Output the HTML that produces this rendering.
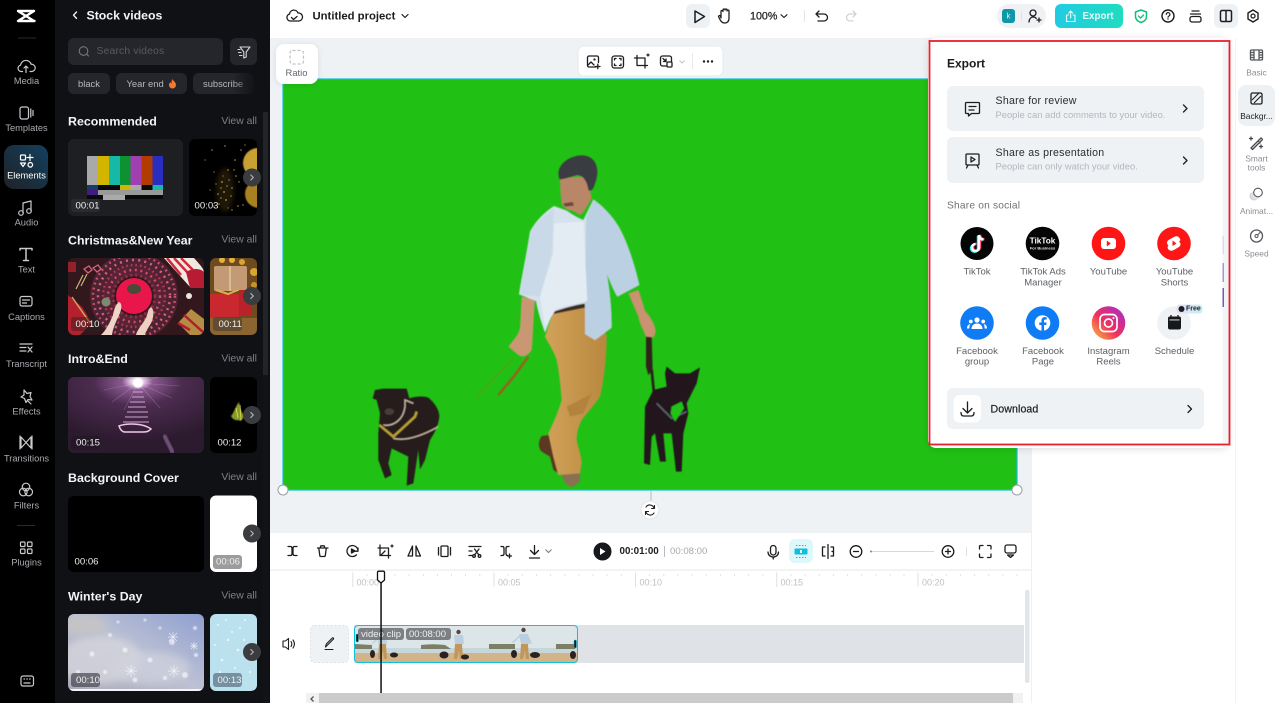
<!DOCTYPE html>
<html><head><meta charset="utf-8"><title>Editor</title>
<style>
html,body{margin:0;padding:0;background:#fff;width:1276px;height:703px;overflow:hidden}
svg{display:block;font-family:"Liberation Sans",sans-serif}
text{dominant-baseline:central}
.rl{font-size:9.3px;fill:#a9abb0;text-anchor:middle}
.rw{fill:none;stroke:#c9cacd;stroke-width:1.2;stroke-linecap:round;stroke-linejoin:round}
.h{font-size:12.4px;font-weight:bold;fill:#f4f4f5}
.va{font-size:10.4px;fill:#7d8086;text-anchor:end}
.d{font-size:9.6px;fill:#f0f0f0}
.ic{fill:none;stroke:#1c1d20;stroke-width:1.3;stroke-linecap:round;stroke-linejoin:round}
.sl{font-size:9.5px;fill:#5c5f64;text-anchor:middle}
.pl{font-size:8.4px;fill:#8a8d92;text-anchor:middle}
.rt{font-size:9px;fill:#bcc0c5}
.tt{font-size:10.6px;fill:#2a2c30;letter-spacing:.25px}
.ts{font-size:9.4px;fill:#b3b6bb}
</style></head><body>
<svg width="1276" height="703" viewBox="0 0 1276 703" xmlns="http://www.w3.org/2000/svg">
<defs>
<clipPath id="c1"><rect x="68" y="258" width="136" height="77" rx="6"/></clipPath>
<clipPath id="c2"><rect x="210" y="258" width="47" height="77" rx="6"/></clipPath>
<clipPath id="c3"><rect x="68" y="377" width="136" height="76" rx="6"/></clipPath>
<clipPath id="c4"><rect x="68" y="614" width="136" height="77" rx="6"/></clipPath>
<clipPath id="c5"><rect x="210" y="614" width="47" height="77" rx="6"/></clipPath>
<clipPath id="c6"><rect x="189" y="139" width="68" height="77" rx="6"/></clipPath>
<clipPath id="clip"><rect x="355" y="626" width="222" height="36" rx="3"/></clipPath>
<radialGradient id="pu" cx="51%" cy="6%" r="80%"><stop offset="0" stop-color="#fff"/><stop offset=".05" stop-color="#f0d8f0"/><stop offset=".14" stop-color="#8a5a90"/><stop offset=".4" stop-color="#4c2c50"/><stop offset="1" stop-color="#2c1a2e"/></radialGradient>
<linearGradient id="ex" x1="0" x2="1"><stop offset="0" stop-color="#22cbe2"/><stop offset="1" stop-color="#1fdcc0"/></linearGradient>
<linearGradient id="el" x1="1" y1="0" x2="0" y2="1"><stop offset="0" stop-color="#13405e"/><stop offset="1" stop-color="#1f2226"/></linearGradient>
<linearGradient id="wi" x1="1" y1="0" x2="0" y2="1"><stop offset="0" stop-color="#8f9fd0"/><stop offset=".5" stop-color="#bcc1d4"/><stop offset="1" stop-color="#a9a9b8"/></linearGradient>
<linearGradient id="ig" x1="0" y1="1" x2="1" y2="0"><stop offset="0" stop-color="#fdc33a"/><stop offset=".45" stop-color="#f0305c"/><stop offset="1" stop-color="#a22bd8"/></linearGradient>
<linearGradient id="fd" x1="0" x2="1"><stop offset="0" stop-color="#101115" stop-opacity="0"/><stop offset="1" stop-color="#101115"/></linearGradient>
<linearGradient id="fr" x1="0" x2="1"><stop offset="0" stop-color="#e8dcf8"/><stop offset="1" stop-color="#c8f0f4"/></linearGradient>
<linearGradient id="pan" x1="0" x2="1"><stop offset="0" stop-color="#d2a25a"/><stop offset="1" stop-color="#b8883f"/></linearGradient>
<filter id="sh" x="-10%" y="-10%" width="120%" height="120%"><feDropShadow dx="0" dy="1" stdDeviation="4" flood-color="#000" flood-opacity=".13"/></filter>
<filter id="sb" x="-30%" y="-30%" width="160%" height="160%"><feDropShadow dx="0" dy="1" stdDeviation="3" flood-color="#000" flood-opacity=".1"/></filter>
<filter id="b0"><feGaussianBlur stdDeviation=".35"/></filter>
<filter id="b1"><feGaussianBlur stdDeviation=".6"/></filter>
<filter id="b2" x="-50%" y="-50%" width="200%" height="200%"><feGaussianBlur stdDeviation="2.500"/></filter>
<filter id="bm"><feGaussianBlur stdDeviation="1.400"/></filter>
<filter id="bf"><feGaussianBlur stdDeviation="4"/></filter>
</defs>

<!-- base surfaces -->
<rect width="1276" height="703" fill="#fff"/>
<rect x="270" y="38" width="762" height="495" fill="#eff2f5"/>
<rect x="1031" y="533" width="1" height="170" fill="#eef0f2"/>
<rect x="1235" y="38" width="1" height="665" fill="#f1f2f4"/>
<rect x="270" y="569" width="761" height="2" fill="#f2f3f5"/>

<!-- left rail -->
<rect width="55" height="703" fill="#000"/>
<path d="M18 11H34L18 21H34.5M18 11L34 21" fill="none" stroke="#fff" stroke-width="2.400" stroke-linejoin="round" stroke-linecap="round"/>
<rect x="18" y="37.500" width="18" height="1" fill="#26272a"/>
<rect x="4" y="145" width="44" height="44" rx="10" fill="url(#el)"/>
<g class="rw">
<path d="M22.500 71.500h-1.500a3.200 3.200 0 0 1-.5-6.300 5.500 5.500 0 0 1 10.700-.9 3.600 3.600 0 0 1 .8 7.200h-2M26 72.500v-6M24 68l2-2 2 2"/>
<rect x="20" y="107" width="8.500" height="12" rx="2"/><path d="M30.800 109v8M33 110.500v5"/>
<g stroke="#fff"><rect x="20.500" y="155" width="5" height="5" rx="1"/><path d="M30 154.500v6M27 157.500h6M20.500 163h5l-2.500 3.500zM30.300 162.500a2.300 2.300 0 1 0 .01 0z"/></g>
<path d="M23 213v-10l8-2v10"/><circle cx="21" cy="213" r="2.300"/><circle cx="29" cy="211" r="2.300"/>
<path d="M20 250v-1.500h12v1.500M26 248.500v12M23.500 260.500h5" stroke-width="1.500"/>
<rect x="20" y="296.500" width="12" height="9.500" rx="2"/><path d="M22.500 300h7M22.500 303h4"/>
<path d="M20 344h12M20 347.500h6M20 351h6M28 347l4 5M32 347l-4 5"/>
<path d="M24 390l3 3.500 4-1-1 4 2 3.500-4-.5-2 3-1.500-4-3.500-1.500 3-2z"/><path d="M28 401l3 3"/>
<path d="M21 437v11l5-5.500zM31 437v11l-5-5.500z"/><path d="M20 436v13M32 436v13"/>
<circle cx="26" cy="487" r="3.800"/><circle cx="23.300" cy="492" r="3.800"/><circle cx="28.700" cy="492" r="3.800"/>
<rect x="20.500" y="542" width="4.500" height="4.500" rx="1"/><rect x="27.500" y="542" width="4.500" height="4.500" rx="1"/><rect x="20.500" y="549" width="4.500" height="4.500" rx="1"/><rect x="27.500" y="549" width="4.500" height="4.500" rx="1"/>
<rect x="21" y="676" width="12.500" height="10" rx="2"/><path d="M24 679h.5M26.800 679h.5M29.600 679h.5M24 683h6"/>
</g>
<text class="rl" x="26.500" y="81">Media</text>
<text class="rl" x="26.500" y="128">Templates</text>
<text class="rl" x="26.500" y="175.500" style="fill:#fff">Elements</text>
<text class="rl" x="26.500" y="222.500">Audio</text>
<text class="rl" x="26.500" y="269.500">Text</text>
<text class="rl" x="26.500" y="317">Captions</text>
<text class="rl" x="26.500" y="364">Transcript</text>
<text class="rl" x="26.500" y="411.500">Effects</text>
<text class="rl" x="26.500" y="458.500">Transitions</text>
<text class="rl" x="26.500" y="505.500">Filters</text>
<text class="rl" x="26.500" y="562.500">Plugins</text>
<rect x="17" y="525" width="18" height="1" fill="#2a2b2e"/>

<!-- stock panel -->
<rect x="55" y="0" width="215" height="703" fill="#101115"/>
<rect x="263" y="112" width="5" height="263" fill="#232428"/>
<rect x="263" y="375" width="5" height="328" fill="#121317"/>
<path d="M76.500 12l-3 3.200 3 3.200" fill="none" stroke="#f2f2f2" stroke-width="1.400" stroke-linecap="round" stroke-linejoin="round"/>
<text x="86.500" y="15.500" style="font-size:12.300px;font-weight:bold;fill:#f4f4f5">Stock videos</text>
<rect x="68" y="38" width="155" height="27" rx="6" fill="#25262b"/>
<circle cx="83.500" cy="51" r="4.300" fill="none" stroke="#73767c" stroke-width="1.100"/><path d="M86.800 54.300l2 2" stroke="#73767c" stroke-width="1.100"/>
<text x="96.500" y="51.500" style="font-size:10.400px;fill:#585a60;letter-spacing:.15px">Search videos</text>
<rect x="230" y="38" width="27" height="27" rx="6" fill="#25262b"/>
<path d="M240 47h10l-3.800 5v5l-2.400 1v-6zM238 49.500h2M238.500 52.500h2.500M239.500 55.500h2.500" fill="none" stroke="#d5d6d8" stroke-width="1.100" stroke-linejoin="round" stroke-linecap="round"/>
<rect x="68" y="73" width="42" height="21" rx="6" fill="#25262b"/>
<text x="89" y="83.500" style="font-size:9.400px;fill:#b7b8bc;text-anchor:middle">black</text>
<rect x="116" y="73" width="71" height="21" rx="6" fill="#25262b"/>
<text x="126.500" y="83.500" style="font-size:9.400px;fill:#b7b8bc">Year end</text>
<path d="M172.500 79c.5 2 3.500 3 3.500 6a3.500 3.500 0 0 1-7 0c0-1.500.8-2.300 1.500-3 .2 1 .5 1.300 1 1.500 0-1.500 0-3 1-4.500z" fill="#ef7a32"/>
<rect x="193" y="73" width="61" height="21" rx="6" fill="#25262b"/>
<text x="203" y="83.500" style="font-size:9.400px;fill:#b7b8bc">subscribe</text>
<rect x="232" y="73" width="25" height="21" fill="url(#fd)"/>

<text class="h" x="68" y="121.500">Recommended</text><text class="va" x="257" y="121.500">View all</text>
<text class="h" x="68" y="240.500">Christmas&amp;New Year</text><text class="va" x="257" y="240">View all</text>
<text class="h" x="68" y="359">Intro&amp;End</text><text class="va" x="257" y="359">View all</text>
<text class="h" x="68" y="478">Background Cover</text><text class="va" x="257" y="477.500">View all</text>
<text class="h" x="68" y="596.500">Winter's Day</text><text class="va" x="257" y="596">View all</text>

<!-- recommended -->
<rect x="68" y="139" width="115" height="77" rx="6" fill="#1e1f23"/>
<rect x="87" y="156" width="76" height="43" fill="#0a0a0a"/>
<g filter="url(#b0)">
<rect x="87" y="156" width="11" height="29" fill="#a9a9a9"/><rect x="98" y="156" width="11" height="29" fill="#d3b500"/><rect x="109" y="156" width="11" height="29" fill="#14b8a8"/><rect x="120" y="156" width="10.500" height="29" fill="#0d9230"/><rect x="130.500" y="156" width="11" height="29" fill="#a040b0"/><rect x="141.500" y="156" width="11" height="29" fill="#b23a06"/><rect x="152.500" y="156" width="10.500" height="29" fill="#2a2fc0"/>
<rect x="87" y="185" width="11" height="5" fill="#123a66"/><rect x="120" y="185" width="10.500" height="5" fill="#d3b500"/><rect x="130.500" y="185" width="11" height="5" fill="#a9a9a9"/><rect x="152.500" y="185" width="10.500" height="5" fill="#14b8a8"/>
<rect x="87" y="190" width="11" height="5" fill="#3f1a80"/><rect x="98" y="190" width="65" height="5" fill="#999"/>
<rect x="103" y="195" width="22" height="5" fill="#aaa"/>
</g>
<rect x="71" y="199" width="29" height="13" rx="3" fill="#2a2b2f"/>
<text class="d" x="75.500" y="206">00:01</text>
<rect x="189" y="139" width="68" height="77" rx="6" fill="#000"/>
<g clip-path="url(#c6)">
<circle cx="258" cy="163" r="15" fill="#c9a030" filter="url(#b1)"/><circle cx="259" cy="194" r="14" fill="#a88224" filter="url(#b1)"/>
<ellipse cx="225" cy="190" rx="9" ry="22" fill="#5a4418" opacity=".35" filter="url(#b2)"/>
<g fill="#c09a44">
<circle cx="212" cy="150" r=".7"/><circle cx="225" cy="146" r=".7"/><circle cx="235" cy="160" r=".8"/><circle cx="228" cy="170" r=".8"/><circle cx="222" cy="182" r=".9"/><circle cx="218" cy="194" r=".8"/><circle cx="226" cy="200" r=".9"/><circle cx="232" cy="188" r=".8"/><circle cx="238" cy="206" r=".8"/><circle cx="214" cy="172" r=".6"/><circle cx="205" cy="160" r=".6"/><circle cx="241" cy="150" r=".7"/><circle cx="236" cy="176" r=".8"/><circle cx="224" cy="192" r=".9"/><circle cx="229" cy="180" r=".7"/><circle cx="219" cy="204" r=".8"/><circle cx="245" cy="145" r=".6"/><circle cx="243" cy="205" r=".7"/><circle cx="232" cy="210" r=".7"/><circle cx="210" cy="190" r=".6"/><circle cx="221" cy="188" r=".7"/><circle cx="227" cy="186" r=".7"/><circle cx="223" cy="176" r=".6"/><circle cx="231" cy="196" r=".7"/><circle cx="221" cy="198" r=".7"/><circle cx="216" cy="184" r=".6"/><circle cx="234" cy="170" r=".7"/><circle cx="239" cy="182" r=".7"/><circle cx="228" cy="208" r=".6"/><circle cx="214" cy="206" r=".6"/>
</g></g>
<text class="d" x="194.500" y="206">00:03</text>

<!-- christmas -->
<g clip-path="url(#c1)">
<rect x="68" y="258" width="136" height="77" fill="#32181c"/>
<g filter="url(#b0)" fill="none">
<circle cx="134" cy="296" r="38" stroke="#4e2430" stroke-width="12"/>
<circle cx="134" cy="296" r="26" stroke="#5a2434" stroke-width="12"/>
<circle cx="134" cy="296" r="41" stroke="#c9526e" stroke-width="2.500" stroke-dasharray="1.800 3.400"/>
<circle cx="134" cy="296" r="36" stroke="#d8607e" stroke-width="2.500" stroke-dasharray="2 4.200"/>
<circle cx="134" cy="296" r="31" stroke="#a83c58" stroke-width="2.500" stroke-dasharray="1.600 3"/>
<circle cx="134" cy="296" r="26" stroke="#c9506c" stroke-width="2.500" stroke-dasharray="2 3.600"/>
<circle cx="134" cy="296" r="21" stroke="#8a3048" stroke-width="3" stroke-dasharray="2 3"/>
</g>
<path d="M164 258h30c5 6 10 10 10 15v12l-8-4-6 6z" fill="#efe9e2"/>
<path d="M167 258l14 17M174 258l14 15M181 258l12 12" stroke="#cf2a3c" stroke-width="2.500"/>
<path d="M186 272c6-4 14-4 18 0v16h-14z" fill="#b81c30" filter="url(#b0)"/>
<circle cx="189" cy="296" r="3" fill="#ece6de"/>
<path d="M178 323l13-14 13 10v16h-14z" fill="#b58c44"/><path d="M184 315l20 18M178 323l12 7" stroke="#b01e30" stroke-width="2.500" fill="none"/>
<path d="M68 295l14 12 10 16-12 12H68z" fill="#b5202e"/><path d="M72 297l18 26" stroke="#c8a860" stroke-width="1.500"/>
<path d="M68 262h8v10h-8z" fill="#96202a"/>
<circle cx="134" cy="296" r="18" fill="#e8174c" filter="url(#b0)"/>
<ellipse cx="134" cy="289" rx="7" ry="5" fill="#4c4a38" filter="url(#b0)"/>
<path d="M101 335c6-6 9-13 12-20 1-6 3-11 6-13 3 1 3 6 1 11-3 7-7 14-8 22z" fill="#f0d4c6"/>
<path d="M136 335c1-5 6-10 10-17 2-5 2-9 5-11 3 2 3 8 1 14-2 5-6 9-7 14z" fill="#ecd0c2"/>
<circle cx="106" cy="302" r="4.500" fill="#7c8a70" filter="url(#b0)"/>
<path d="M76 289l7-14M81 286l6-12" stroke="#c9b27a" stroke-width="1.200"/>
<path d="M84 269l5-3 3 4-4 3zM93 268l5-3 3 4-4 3z" fill="none" stroke="#d2647e" stroke-width="1.300"/>
</g>
<rect x="71" y="317" width="29" height="14" rx="3" fill="rgba(40,30,30,.45)"/>
<text class="d" x="75.500" y="324.500">00:10</text>
<g clip-path="url(#c2)">
<rect x="210" y="258" width="47" height="77" fill="#6d4b1e"/>
<circle cx="222" cy="260" r="3" fill="#e2b23c"/><circle cx="232" cy="260" r="3" fill="#e2b23c"/><circle cx="242" cy="262" r="3" fill="#d6a532"/><circle cx="254" cy="272" r="4" fill="#d6a532"/><circle cx="254" cy="285" r="3" fill="#c4942a"/>
<rect x="214" y="266" width="33" height="25" rx="2" fill="#c49a74"/><path d="M230 266v25" stroke="#d8bc96" stroke-width="2"/>
<rect x="210" y="294" width="29" height="24" fill="#c8282e"/><rect x="239" y="290" width="12" height="25" fill="#b82228"/>
<path d="M216 290l12 4 10-4" stroke="#d8b24a" stroke-width="2" fill="none"/>
<rect x="210" y="318" width="47" height="17" fill="#8a6530"/>
</g>
<rect x="213" y="317" width="29" height="14" rx="3" fill="rgba(70,60,50,.6)"/>
<text class="d" x="218.500" y="324.500">00:11</text>

<!-- intro -->
<rect x="68" y="377" width="136" height="76" rx="6" fill="url(#pu)"/>
<g clip-path="url(#c3)">
<g stroke="#f3d9f0" stroke-width=".6" opacity=".28" filter="url(#b0)"><path d="M138 383L112 402M138 383L124 410M138 383L160 408M138 383L172 398M138 383L104 390M138 383L180 386M138 383L118 377M138 383L158 377"/></g>
<circle cx="138" cy="383" r="5" fill="#fff" filter="url(#b1)"/>
<g fill="none" stroke="#d2a4d0" stroke-width="1" filter="url(#b0)"><path d="M133 392h10M132 397h12M130 402h15M128 407h18M127 412h21M125 417h23M123 422h26"/></g>
<path d="M119 426c8-3 24-3 32 3-3 3-5 3-8 3h-18c-3 0-5-3-6-6z" fill="none" stroke="#f0c8ea" stroke-width="1.500" filter="url(#b0)"/>
<path d="M164 435l9 18" stroke="#6f5078" stroke-width="4" filter="url(#b1)"/>
</g>
<rect x="71" y="436" width="29" height="14" rx="3" fill="rgba(30,20,30,.5)"/>
<text class="d" x="76" y="443">00:15</text>
<rect x="210" y="377" width="47" height="76" rx="6" fill="#000"/>
<path d="M231 416c3-3 4-9 8-14 1 5 2 11 6 14-3 3-4 7-6 4-2 1-6 0-8-4z" fill="#8a9a2a" filter="url(#b1)"/>
<path d="M236 408l2 10M240 405l1 15" stroke="#dde050" stroke-width=".8"/>
<text class="d" x="217.500" y="443">00:12</text>

<!-- background -->
<rect x="68" y="496" width="136" height="76" rx="6" fill="#000"/>
<text class="d" x="74.500" y="562">00:06</text>
<rect x="210" y="495.500" width="47" height="76.500" rx="6" fill="#fff"/>
<rect x="213" y="555" width="29" height="14" rx="3" fill="#9c9c9c"/>
<text class="d" x="216" y="562">00:06</text>

<!-- winter -->
<g clip-path="url(#c4)">
<rect x="68" y="614" width="136" height="77" fill="url(#wi)"/>
<ellipse cx="100" cy="660" rx="42" ry="24" fill="#d5d5dc" opacity=".8" filter="url(#bf)"/>
<ellipse cx="150" cy="668" rx="40" ry="16" fill="#d0d2de" opacity=".7" filter="url(#bf)"/>
<ellipse cx="85" cy="625" rx="22" ry="10" fill="#c4c4c6" filter="url(#bf)"/>
<g fill="#fff" opacity=".6" filter="url(#b1)">
<circle cx="92" cy="654" r="2.500"/><circle cx="110" cy="635" r="2"/><circle cx="125" cy="650" r="2.500"/><circle cx="150" cy="660" r="2.500"/><circle cx="172" cy="642" r="3"/><circle cx="185" cy="675" r="3"/><circle cx="195" cy="628" r="2"/><circle cx="135" cy="680" r="2.500"/><circle cx="78" cy="672" r="2"/><circle cx="105" cy="672" r="2"/><circle cx="160" cy="628" r="1.500"/><circle cx="145" cy="620" r="1.500"/><circle cx="118" cy="622" r="1.500"/><circle cx="196" cy="655" r="2"/><circle cx="165" cy="678" r="2"/>
</g>
<g stroke="#fff" stroke-width=".7" opacity=".75"><path d="M198 646h-8M194 642v8M191 643l6 6M197 643l-6 6M137 671h-12M131 665v12M127 667l8 8M135 667l-8 8M180 671h-12M174 665v12M170 667l8 8M178 667l-8 8M178 637h-10M173 632v10M169 633l8 8M177 633l-8 8"/></g>
<rect x="68" y="689" width="136" height="2" fill="#f4f4f6"/>
</g>
<rect x="71" y="673" width="29" height="14" rx="3" fill="rgba(60,60,70,.65)"/>
<text class="d" x="76" y="680.500">00:10</text>
<g clip-path="url(#c5)">
<rect x="210" y="614" width="47" height="77" fill="#bce1ee"/>
<g fill="#fff" opacity=".7" filter="url(#b0)"><circle cx="218" cy="625" r="1"/><circle cx="228" cy="640" r="1.200"/><circle cx="240" cy="628" r="1"/><circle cx="250" cy="650" r="1.200"/><circle cx="222" cy="660" r="1.300"/><circle cx="235" cy="668" r="1"/><circle cx="245" cy="620" r="1"/><circle cx="215" cy="645" r="1"/><circle cx="238" cy="650" r="1.300"/><circle cx="226" cy="620" r="1"/><circle cx="250" cy="672" r="1"/><circle cx="232" cy="632" r="1"/><circle cx="220" cy="672" r="1"/><circle cx="244" cy="640" r="1"/></g>
</g>
<rect x="213" y="673" width="29" height="14" rx="3" fill="rgba(70,90,110,.6)"/>
<text class="d" x="217.500" y="680.500">00:13</text>

<!-- thumb arrows -->
<g>
<circle cx="252" cy="177.500" r="9" fill="#3a3c40"/><circle cx="252" cy="296" r="9" fill="#3a3c40"/><circle cx="252" cy="415" r="9" fill="#3a3c40"/><circle cx="252" cy="533.500" r="9" fill="#3a3c40"/><circle cx="252" cy="652" r="9" fill="#3a3c40"/>
<g fill="none" stroke="#b8b9bc" stroke-width="1.100" stroke-linecap="round" stroke-linejoin="round"><path d="M250.800 175l2.500 2.500-2.500 2.500M250.800 293.500l2.500 2.500-2.500 2.500M250.800 412.500l2.500 2.500-2.500 2.500M250.800 531l2.500 2.500-2.500 2.500M250.800 649.500l2.500 2.500-2.500 2.500"/></g>
</g>

<!-- top bar left -->
<g class="ic" stroke-width="1.400"><path d="M290 21a3.600 3.600 0 0 1-.5-7 4.400 4.400 0 0 1 8.500-1 3.900 3.900 0 0 1 1 8z"/><path d="M291.500 17.500l2 2 3.500-3"/></g>
<text x="312.500" y="16.500" style="font-size:11.300px;font-weight:bold;fill:#1b1c20">Untitled project</text>
<path d="M402 14.500l3 3 3-3" fill="none" stroke="#1c1d20" stroke-width="1.200" stroke-linecap="round" stroke-linejoin="round"/>
<rect x="686" y="4" width="24" height="24" rx="6" fill="#eef1f4"/>
<path d="M695 11l9.500 5.500-9.500 6z" fill="none" stroke="#1c1d20" stroke-width="1.500" stroke-linejoin="round"/>
<g class="ic"><path d="M721 18v-6.500a1 1 0 0 1 2 0v-1.500a1 1 0 0 1 2 0v0a1 1 0 0 1 2 0v1a1 1 0 0 1 2 0v7.500c0 3-2 4.500-4.200 4.500-2.300 0-3.300-1-4.300-2.500l-1.800-3.500c-.5-1.200 1-2 1.800-1z"/></g>
<text x="750" y="16.500" style="font-size:10.700px;fill:#1f2024;stroke:#1f2024;stroke-width:.25">100%</text>
<path d="M781 14.700l3 2.800 3-2.800" fill="none" stroke="#1c1d20" stroke-width="1.100" stroke-linecap="round" stroke-linejoin="round"/>
<rect x="804" y="10" width="1" height="12" fill="#e2e4e7"/>
<g class="ic"><path d="M819 11l-3 3 3 3M816 14h8a3.500 3.500 0 0 1 0 7h-6"/></g>
<g class="ic" style="stroke:#d0d3d7"><path d="M853 11l3 3-3 3M856 14h-6a3.500 3.500 0 0 0 0 7h3"/></g>

<!-- top right -->
<rect x="997" y="4" width="49" height="24" rx="12" fill="#eff1f4"/>
<rect x="1002" y="9" width="13" height="14" rx="3" fill="#0e97a6"/>
<text x="1008.500" y="16" style="font-size:8px;fill:#d6f3f5;text-anchor:middle">k</text>
<rect x="1021" y="12" width="1" height="8" fill="#dfe2e5"/>
<g class="ic"><circle cx="1033" cy="13" r="3"/><path d="M1029 22c0-3 2-5 4-5 1.500 0 2.600.5 3.200 1.300M1037 20h4M1039 18v4"/></g>
<rect x="1055" y="4" width="68" height="24" rx="6" fill="url(#ex)"/>
<g fill="none" stroke="#e8fbfb" stroke-width="1.100" stroke-linecap="round" stroke-linejoin="round"><path d="M1068.500 15h-2v6.500h8.500V15h-2M1070.700 18v-6.500M1068.700 13l2-2 2 2"/></g>
<text x="1082.500" y="16.500" style="font-size:9.800px;font-weight:bold;fill:#e9fbfb">Export</text>
<path d="M1141 10l5.500 2v4.500c0 3-2.500 5-5.500 6-3-1-5.500-3-5.500-6V12z" fill="none" stroke="#12bd7c" stroke-width="1.500" stroke-linejoin="round"/>
<path d="M1138.500 16l2 2 3-3" fill="none" stroke="#12bd7c" stroke-width="1.300" stroke-linecap="round" stroke-linejoin="round"/>
<circle cx="1168" cy="16" r="6" fill="none" stroke="#1c1d20" stroke-width="1.400"/>
<path d="M1166.300 14.500a1.800 1.800 0 1 1 2.700 1.500c-.7.400-1 .7-1 1.300" fill="none" stroke="#1c1d20" stroke-width="1.100" stroke-linecap="round"/><circle cx="1168" cy="19" r=".7" fill="#1c1d20"/>
<g class="ic" stroke-width="1.500"><path d="M1192 11h7M1190.500 14h10"/><rect x="1190" y="16.500" width="11" height="5.500" rx="2"/></g>
<rect x="1214" y="4" width="24" height="24" rx="6" fill="#eef1f4"/>
<rect x="1220.500" y="10.500" width="11" height="11" rx="1.500" fill="none" stroke="#1c1d20" stroke-width="1.500"/><path d="M1226 10.500v11" stroke="#1c1d20" stroke-width="1.500"/>
<path d="M1253 10l5 3v6l-5 3-5-3v-6z" fill="none" stroke="#1c1d20" stroke-width="1.400" stroke-linejoin="round"/><circle cx="1253" cy="16" r="2" fill="none" stroke="#1c1d20" stroke-width="1.300"/>

<!-- video canvas -->
<rect x="283" y="79" width="734" height="411" fill="#20c114"/>
<rect x="283" y="79" width="734" height="411" fill="none" stroke="#10bfdc" stroke-width="1.200"/>
<g transform="translate(350 140) scale(.33333)" filter="url(#bm)">
<!-- leashes -->
<path d="M490 655L380 770" fill="none" stroke="#5d9a1e" stroke-width="4"/>
<path d="M535 650L495 705L445 765" fill="none" stroke="#a35a1c" stroke-width="7"/>
<path d="M905 690L912 760" stroke="#2a1c1e" stroke-width="8" fill="none"/>
<path d="M888 590L905 585L908 690L895 705L888 680z" fill="#33201f"/>
<!-- shoes -->
<path d="M575 888L600 885L620 950L622 998L610 990L600 950L575 935C565 925 563 905 575 888Z" fill="#5a3820"/>
<path d="M635 1005L690 995L690 1025L665 1042L645 1030Z" fill="#8a7052"/>
<!-- pants -->
<path d="M612 510C640 500 675 495 705 495L770 585C770 650 762 720 750 770C730 800 710 820 695 840C685 860 680 880 680 900C685 925 695 950 695 970L690 1000L625 1005L610 950L595 880C610 850 625 815 635 780C632 740 628 700 620 660C610 630 595 610 585 590Z" fill="url(#pan)"/>
<path d="M650 800C670 790 700 775 725 760L700 820L660 830Z" fill="#b3833c"/>
<path d="M612 510L702 488L706 503L610 522Z" fill="#3c2a22"/>
<!-- arms -->
<path d="M515 470L555 480C552 515 550 550 548 590L545 630C535 645 520 655 505 645L475 620C490 600 505 585 510 565Z" fill="#c99873"/>
<path d="M835 460L865 450C875 475 880 495 885 512C900 530 915 550 917 575L912 592L888 590C880 570 868 550 865 530Z" fill="#c99270"/>
<!-- shirt -->
<path d="M612 198C585 215 555 245 540 275C530 340 515 410 507 463C525 470 545 478 558 483C565 520 575 550 585 578L610 515C640 505 675 495 705 490L705 582L735 600L785 563C785 510 780 450 770 400C780 425 790 450 802 470L868 435C855 380 835 310 805 258C785 225 755 195 730 178L700 240C680 232 665 222 650 212Z" fill="#d5e1ec"/>
<path d="M708 232L730 178C755 195 785 225 805 258C835 310 855 380 868 435L802 470C790 450 780 425 770 400C780 450 785 510 785 563L735 600L705 582Z" fill="#bcd0e3"/>
<path d="M612 250L700 245L712 482L620 505L585 560L570 470L610 340Z" fill="#e3ecf3"/>
<path d="M540 275C560 245 590 220 612 205L605 340L570 470L510 463C518 410 530 340 540 275Z" fill="#c9d9e8"/>
<!-- head -->
<path d="M630 118C650 115 680 108 700 112C712 125 722 150 725 175C710 200 700 220 690 225L668 212C650 212 640 200 635 190L632 165Z" fill="#b98767"/>
<path d="M640 190L668 186L672 197L645 200Z" fill="#6c4a3a"/>
<path d="M625 100C628 60 680 40 710 48C745 58 748 100 735 130C730 150 722 155 715 150C712 125 700 105 680 105C660 112 640 118 628 118Z" fill="#3a3b42"/>
<!-- dog 1 -->
<path d="M68 775L75 750L100 746L170 746L178 775C200 768 220 768 235 773C255 790 268 810 268 830C265 860 250 885 240 900L225 960L210 988L205 930L190 1030L170 1037L175 950L125 925L115 970L125 1005L105 1015L85 960L85 880L90 820L80 780Z" fill="#261b1a"/>
<path d="M88 855L130 890L195 830L200 815" fill="none" stroke="#b9a232" stroke-width="7"/>
<path d="M100 855C130 860 160 840 165 800L165 780L190 790M130 895C170 905 220 885 265 860" fill="none" stroke="#c9b9a5" stroke-width="4"/>
<ellipse cx="118" cy="815" rx="14" ry="10" fill="#4a3c3a"/>
<!-- dog 2 -->
<path d="M950 680L975 700L1020 700L1050 682L1040 730L1010 790L1015 820L1000 880L995 995L978 995L965 880L940 880L948 965L930 965L915 880L905 890L900 975L882 970L885 800L910 750L950 740L945 700Z" fill="#23191c"/>
<path d="M920 790L965 835L1010 815" fill="none" stroke="#5a6470" stroke-width="5"/>
<path d="M965 800L995 785L1002 805L975 845L962 820Z" fill="#20c114"/>
</g>

<!-- ratio & toolbar -->
<rect x="276" y="44" width="42" height="40" rx="8" fill="#fff" filter="url(#sb)"/>
<rect x="290" y="50.500" width="13.500" height="13.500" rx="2.500" fill="none" stroke="#bcc0c6" stroke-width="1.200" stroke-dasharray="3 2"/>
<text x="296.500" y="72.500" style="font-size:9.400px;fill:#63666b;text-anchor:middle">Ratio</text>
<circle cx="283" cy="79" r="4.800" fill="#fff"/>
<rect x="578" y="46" width="145" height="30" rx="6" fill="#fff" stroke="#e7eaed"/>
<g class="ic" stroke-width="1.400">
<path d="M596 67h-7a1.500 1.500 0 0 1-1.500-1.500v-8a1.500 1.500 0 0 1 1.500-1.500h8a1.500 1.500 0 0 1 1.500 1.500v5"/><path d="M588 65l3-3 3 3M595.500 66.500h4.500M597.800 64.200v4.500"/><circle cx="594.500" cy="59.500" r=".5"/>
<rect x="612" y="56" width="11.500" height="12" rx="2.500"/><path d="M614.500 60v-1.500h1.500M621 60v-1.500h-1.500M614.500 64v1.500h1.500M621 64v1.500h-1.500"/>
<path d="M637 55.500v10h10.500M634.500 58h10.500v10M647 55l2 0M648 54v2" />
<rect x="660.500" y="56" width="11" height="10" rx="2"/><path d="M663 58.500l3 3M666 59v2.500h-2.500"/><rect x="667" y="62" width="5" height="5" rx="1" fill="#fff"/>
</g>
<path d="M679.500 60.500l2.500 2.500 2.500-2.500" fill="none" stroke="#c2c5c9" stroke-width="1"/>
<rect x="692" y="53" width="1" height="16" fill="#e7eaed"/>
<g fill="#1c1d20"><circle cx="704" cy="61.500" r="1.200"/><circle cx="708" cy="61.500" r="1.200"/><circle cx="712" cy="61.500" r="1.200"/></g>

<circle cx="283" cy="490" r="5" fill="#fff" stroke="#9aa0a6"/>
<circle cx="1017" cy="490" r="5" fill="#fff" stroke="#9aa0a6"/>
<rect x="650.500" y="491" width="1" height="10" fill="#b5b9be"/>
<circle cx="650" cy="510" r="9" fill="#fff" stroke="#e2e4e8"/>
<path d="M654 508a4.500 4.500 0 0 0-8-1M646 512a4.500 4.500 0 0 0 8 1M654.500 505.500v3h-3M645.500 514.500v-3h3" fill="none" stroke="#1c1d20" stroke-width="1.100" stroke-linecap="round" stroke-linejoin="round"/>

<!-- right rail -->
<g class="ic" style="stroke:#55585d">
<rect x="1250.500" y="50" width="12" height="10" rx="1"/><path d="M1254 50v10M1259 50v10M1250.500 55h3.500M1259 55h3.500M1250.500 52.500h3.500M1250.500 57.500h3.500M1259 52.500h3.500M1259 57.500h3.500"/>
</g>
<text class="pl" x="1256.500" y="72.500">Basic</text>
<rect x="1238" y="85" width="37" height="41" rx="8" fill="#eef1f4"/>
<rect x="1251" y="93" width="11" height="11" rx="1.500" fill="none" stroke="#1c1d20" stroke-width="1.300"/>
<path d="M1252 100l7-7M1254 103l7-7" stroke="#1c1d20" stroke-width="1.100"/>
<text class="pl" x="1256.500" y="116" style="fill:#1c1d20">Backgr...</text>
<g class="ic" style="stroke:#44474c"><path d="M1251 148l10-10 1.500 1.500-10 10zM1258 141l2 2M1251 137v3M1249.500 138.500h3M1261 145v3M1259.500 146.500h3"/></g>
<text class="pl" x="1256.500" y="158.500">Smart</text><text class="pl" x="1256.500" y="167.500">tools</text>
<circle cx="1254" cy="196" r="4.500" fill="#cfd2d6"/><circle cx="1255.500" cy="195" r="4.500" fill="#e0e2e5"/><circle cx="1258" cy="192.500" r="4.300" fill="#fff" stroke="#55585d" stroke-width="1.100"/>
<text class="pl" x="1256.500" y="211">Animat...</text>
<circle cx="1256.500" cy="236" r="6" fill="none" stroke="#55585d" stroke-width="1.300"/><circle cx="1256.500" cy="236" r="1.500" fill="none" stroke="#55585d"/><path d="M1257.500 235l3-3" stroke="#55585d"/>
<text class="pl" x="1256.500" y="253.500">Speed</text>

<!-- export panel -->
<rect x="928" y="38" width="300" height="410" rx="8" fill="#fff" filter="url(#sh)"/>
<rect x="1222.500" y="43" width="5.500" height="400" fill="#f3f4f6"/>
<rect x="1222.500" y="236" width="1.500" height="18" fill="#dcd8ee"/><rect x="1222.500" y="263" width="1.500" height="19" fill="#a596d8"/><rect x="1222.500" y="288" width="1.500" height="19" fill="#6f5cb8"/>
<rect x="929.500" y="41" width="300" height="403.500" fill="none" stroke="#e8202e" stroke-width="1.800"/>
<text x="947" y="63.500" style="font-size:12px;font-weight:bold;fill:#1b1c20">Export</text>
<rect x="947" y="86" width="257" height="45" rx="6" fill="#eff2f5"/>
<rect x="947" y="137" width="257" height="46" rx="6" fill="#eff2f5"/>
<g class="ic" stroke-width="1.500">
<path d="M966.500 102.500h12a1 1 0 0 1 1 1v9a1 1 0 0 1-1 1h-7l-3 2.500v-2.500h-2a1 1 0 0 1-1-1v-9a1 1 0 0 1 1-1zM969 106.500h7M969 110h5"/>
<rect x="966" y="154" width="13" height="11" rx="1"/><path d="M968 165l-1.500 3M977 165l1.500 3M971 157l4 2.500-4 2.500z"/>
<path d="M1183.500 105l3.500 3.500-3.500 3.500M1183.500 157l3.500 3.500-3.500 3.500"/>
</g>
<text class="tt" x="995.500" y="101">Share for review</text>
<text class="ts" x="995.500" y="114.500">People can add comments to your video.</text>
<text class="tt" x="995.500" y="153">Share as presentation</text>
<text class="ts" x="995.500" y="166">People can only watch your video.</text>
<text x="947" y="206" style="font-size:10.200px;fill:#6f7278;letter-spacing:.2px">Share on social</text>

<circle cx="977" cy="243.500" r="16.500" fill="#050505"/>
<path d="M979 235v12.500a3.500 3.500 0 1 1-3.500-3.500M979 235c.3 2.500 2 4.300 4.500 4.500" fill="none" stroke="#25f4ee" stroke-width="2.500" transform="translate(-1 .8)"/>
<path d="M979 235v12.500a3.500 3.500 0 1 1-3.500-3.500M979 235c.3 2.500 2 4.300 4.500 4.500" fill="none" stroke="#fe2c55" stroke-width="2.500" transform="translate(1 -.2)"/>
<path d="M979 235v12.500a3.500 3.500 0 1 1-3.500-3.500M979 235c.3 2.500 2 4.300 4.500 4.500" fill="none" stroke="#fff" stroke-width="2.500"/>
<circle cx="1042.500" cy="243.500" r="16.800" fill="#050505"/>
<text x="1042.500" y="241" style="font-size:8.200px;font-weight:bold;fill:#fff;text-anchor:middle">TikTok</text>
<text x="1042.500" y="247.800" style="font-size:4px;font-weight:bold;fill:#e8e8e8;text-anchor:middle">For Business</text>
<circle cx="1108.500" cy="243.500" r="16.800" fill="#fe1616"/>
<rect x="1101" y="238" width="15" height="11" rx="3" fill="#fff"/><path d="M1106.800 240.500l4 3-4 3z" fill="#fe1616"/>
<circle cx="1174" cy="243.500" r="16.800" fill="#fe1616"/>
<path d="M1179.500 238c-1.500-2.500-4-2-6-.8l-4.500 2.600c-2.600 1.500-2.500 4.300-.5 5.500-1.500 1.500-1 4 1 5 2 1 3.500.2 5-.7l4-2.300c2.600-1.500 2.700-4.300.5-5.600 1.600-.9 1.600-2.400.5-3.700z" fill="#fff"/><path d="M1172.500 240.500l4 3-4 2.500z" fill="#fe1616"/>
<circle cx="977" cy="323" r="16.800" fill="#0f7cf5"/>
<g fill="#fff"><circle cx="977" cy="320" r="2.600"/><circle cx="970.800" cy="321.500" r="1.900"/><circle cx="983.200" cy="321.500" r="1.900"/><path d="M971.500 329c0-3.500 2.200-5.500 5.500-5.500s5.500 2 5.500 5.500zM967 328.500c0-2.500 1-4 3.200-4.500-.6 1.200-.8 2.800-.8 4.500zM987 328.500c0-2.500-1-4-3.200-4.500.6 1.200.8 2.800.8 4.500z"/></g>
<circle cx="1042.500" cy="323" r="16.800" fill="#0f7cf5"/>
<circle cx="1042.500" cy="323" r="7.800" fill="#fff"/>
<path d="M1044 331v-6h2.200l.4-2.500H1044v-1.700c0-.8.400-1.300 1.400-1.300h1.300v-2.200c-.5-.1-1.200-.2-1.900-.2-2.100 0-3.300 1.200-3.300 3.400v2h-2.200v2.500h2.200v6z" fill="#0f7cf5"/>
<circle cx="1108.500" cy="323" r="16.800" fill="url(#ig)"/>
<rect x="1100" y="314.500" width="17" height="17" rx="4.500" fill="none" stroke="#fff" stroke-width="1.700"/>
<circle cx="1108.500" cy="323" r="4" fill="none" stroke="#fff" stroke-width="1.700"/><circle cx="1113.500" cy="318" r="1" fill="#fff"/>
<circle cx="1174" cy="323" r="16.800" fill="#eff2f5"/>
<rect x="1168" y="316.500" width="13" height="13" rx="2" fill="#17181c"/>
<path d="M1171 315v3M1178 315v3" stroke="#17181c" stroke-width="1.300"/><rect x="1169.500" y="319.500" width="10" height=".9" fill="#eff2f5"/>
<rect x="1176.500" y="304.500" width="26" height="9" rx="3" fill="url(#fr)"/>
<circle cx="1181.500" cy="309" r="3" fill="#1c1d20"/>
<text x="1186" y="309.200" style="font-size:7px;font-weight:bold;fill:#1c1d20">Free</text>
<text class="sl" x="977" y="272">TikTok</text>
<text class="sl" x="1043" y="272">TikTok Ads</text><text class="sl" x="1043" y="283">Manager</text>
<text class="sl" x="1108.500" y="272">YouTube</text>
<text class="sl" x="1174.500" y="272">YouTube</text><text class="sl" x="1174.500" y="283">Shorts</text>
<text class="sl" x="977" y="351.500">Facebook</text><text class="sl" x="977" y="362">group</text>
<text class="sl" x="1043" y="351.500">Facebook</text><text class="sl" x="1043" y="362">Page</text>
<text class="sl" x="1108.500" y="351.500">Instagram</text><text class="sl" x="1108.500" y="362">Reels</text>
<text class="sl" x="1174.500" y="351.500">Schedule</text>
<rect x="947" y="388" width="257" height="41" rx="6" fill="#eff2f5"/>
<rect x="953.500" y="395" width="27.500" height="27.500" rx="6" fill="#fff"/>
<g class="ic" stroke-width="1.500"><path d="M967.500 402v10.500M963 408.500l4.500 4.500 4.500-4.500M961 412.500c0 2 .8 3.500 2.500 3.500h8c1.700 0 2.500-1.500 2.500-3.500"/><path d="M1188 405.500l3.500 3.500-3.500 3.500"/></g>
<text x="990.500" y="409.500" style="font-size:10.600px;fill:#1c1d20;stroke:#1c1d20;stroke-width:.2;letter-spacing:.1px">Download</text>

<!-- timeline toolbar -->
<g class="ic" stroke-width="1.400">
<path d="M288 546.500h2.500c1 0 1.500.8 1.500 2v5c0 1.200-.5 2-1.500 2H288M297 546.500h-2.500c-1 0-1.500.8-1.500 2v5c0 1.200.5 2 1.500 2h2.500"/>
<path d="M317.500 548h10.500M320.500 548v-1.200c0-.7.500-1 1-1h2c.6 0 1 .3 1 1v1.200M318.800 548l1 7.500c0 .7.600 1 1.200 1h3c.7 0 1.200-.3 1.300-1l1-7.500"/>
<path d="M358 551a5.500 5.500 0 1 0-1.500 3.800M358 548v3.200h-3"/><path d="M351.500 549l3.500 2-3.500 2z" fill="#1c1d20"/>
<path d="M380 545v10.500h10.500M378 548h10.500v10M385 551l-4 4M391 546h2M392 545v2"/>
<path d="M412.500 546l-4.500 10h4.500zM416 546l4.500 10H416z"/>
<rect x="441" y="546" width="7" height="10.500" rx="1"/><path d="M438.500 547.500v7.500M450.500 547.500v7.500"/>
<path d="M469 546.500h12M469 551h3M469 555.500h3M474.500 549l4.500 6M479 549l-4.500 6"/><circle cx="474" cy="556" r="1.300"/><circle cx="479.500" cy="556" r="1.300"/>
<path d="M501 546.500h1.500c1 0 1.500.8 1.500 2v5c0 1.200-.5 2-1.500 2H501M509 546.500h-1.500c-1 0-1.500.8-1.500 2v5c0 1.200.5 2 1.500 2"/><path d="M509.500 554v4M507.500 556h4"/>
<path d="M534.500 545.500v8.500M530.500 550.500l4 4 4-4M529.500 558h10"/>
</g>
<path d="M545.500 549.500l3 3 3-3" fill="none" stroke="#777" stroke-width="1"/>
<circle cx="602.500" cy="551.500" r="9" fill="#17181c"/><path d="M600 548l5.500 3.500-5.500 3.500z" fill="#fff"/>
<text x="619.500" y="551.500" style="font-size:9.800px;font-weight:bold;fill:#1c1d20">00:01:00</text>
<rect x="664" y="546" width="1" height="11" fill="#b8bcc2"/>
<text x="670" y="551.500" style="font-size:9.600px;fill:#a5a9af">00:08:00</text>
<g class="ic" stroke-width="1.400">
<rect x="770.500" y="545.500" width="5.500" height="9.500" rx="2.750"/><path d="M768 552c0 3 2.400 5 5.250 5s5.250-2 5.250-5M773.250 557v2"/>
<rect x="789" y="539" width="24" height="24" rx="6" fill="#def7fb" stroke="none"/>
<path d="M828 544.500v14M825 547h-2.500v9h2.500M831 547h2.500v4.500l-1.500 0M831 556h2.500v-4.500"/>
<circle cx="856" cy="551.500" r="5.800"/><path d="M853.500 551.500h5"/>
<circle cx="948" cy="551.500" r="5.800"/><path d="M945.500 551.500h5M948 549v5"/>
<path d="M979.500 549v-2.500a1 1 0 0 1 1-1h2.500M987.500 545.500h2.500a1 1 0 0 1 1 1v2.500M979.500 554v2.500a1 1 0 0 0 1 1h2.500M987.500 557.500h2.500a1 1 0 0 0 1-1V554"/>
<rect x="1005" y="545" width="11" height="8" rx="2"/><path d="M1007.500 555h6l-3 2.500z"/>
</g>
<rect x="794.500" y="548.500" width="13" height="6" rx="1" fill="#10bfdc"/><rect x="800" y="550" width="2" height="3" fill="#def7fb"/>
<g stroke="#10bfdc" stroke-width="1" stroke-dasharray="1.500 1.500"><path d="M796 545.500h10M796 557.500h10"/></g>
<rect x="870" y="551" width="64" height="1" fill="#d5d8dd"/><rect x="870" y="550.700" width="2" height="1.600" fill="#888"/>
<rect x="966" y="547" width="1" height="9" fill="#dfe2e5"/>

<!-- ruler -->
<g stroke="#dfe1e4" stroke-width="1">
<path d="M352.800 572.500V587M494 572.500V587M635.500 572.500V587M776.700 572.500V587M918 572.500V587"/>
<path d="M367 574v2M381 574v2M395 574v2M409 574v2M423.500 574v2M437.500 574v2M451.500 574v2M465.500 574v2M479.800 574v2M508 574v2M522.300 574v2M536.500 574v2M550.600 574v2M564.800 574v2M579 574v2M593 574v2M607 574v2M621.300 574v2M649.600 574v2M663.800 574v2M678 574v2M692 574v2M706.200 574v2M720.400 574v2M734.500 574v2M748.600 574v2M762.800 574v2M791 574v2M805 574v2M819.300 574v2M833.400 574v2M847.600 574v2M861.700 574v2M875.800 574v2M890 574v2M904 574v2M932 574v2M946.300 574v2M960.400 574v2M974.600 574v2M988.700 574v2M1002.800 574v2M1017 574v2"/>
</g>
<text class="rt" x="356.500" y="582.500">00:00</text><text class="rt" x="498" y="582.500">00:05</text><text class="rt" x="639.500" y="582.500">00:10</text><text class="rt" x="780.500" y="582.500">00:15</text><text class="rt" x="922" y="582.500">00:20</text>

<!-- tracks -->
<rect x="1025" y="590" width="4.500" height="93" rx="2" fill="#e2e5e8"/>
<path d="M283 641h2.500l3-2.500v11l-3-2.500H283zM291 641.500c1 1.500 1 3.500 0 5M293 640c1.800 2.500 1.800 5.500 0 8" fill="none" stroke="#1c1d20" stroke-width="1.100" stroke-linejoin="round" stroke-linecap="round"/>
<rect x="310.500" y="625.500" width="38" height="37" rx="4" fill="#eff2f5" stroke="#dde0e4" stroke-dasharray="2 2"/>
<path d="M325.500 647l.8-3 6-6c.7-.7 1.800.4 1.100 1.100l-6 6zM325 649.500h8" fill="none" stroke="#1c1d20" stroke-width="1.100" stroke-linecap="round" stroke-linejoin="round"/>
<rect x="354" y="625" width="670" height="38" fill="#dfe2e6"/>
<rect x="354" y="625" width="224" height="38" rx="4" fill="#10bfdc"/>
<g clip-path="url(#clip)">
<rect x="355" y="626" width="222" height="24" fill="#dce6e8"/>
<rect x="355" y="648" width="222" height="6" fill="#c6d6da"/>
<rect x="355" y="653" width="222" height="9" fill="#d3b388"/>
<path d="M355 644l17 1v4h-17zM421 645c8-1 16-1 24 0l6 4h-30zM489 644l26 0v5h-26zM556 644l19 0v5h-19z" fill="#7a7f66"/>
<g filter="url(#b0)">
<circle cx="382" cy="632" r="2.200" fill="#5b4438"/><path d="M378 635h8l1 9h-9zM372 643l7-7v2l-6 6z" fill="#bfd0de"/><path d="M379 644h7l1 15h-3l-1-8-2 8h-3z" fill="#c19658"/>
<ellipse cx="372.500" cy="654" rx="2.500" ry="4" fill="#2b2220"/><ellipse cx="394" cy="655" rx="4" ry="2.500" fill="#2b2220"/>
<circle cx="458.500" cy="632" r="2.200" fill="#5b4438"/><path d="M454 635h9l1 9h-9z" fill="#b9cfe1"/><path d="M455 644h7l1 15h-3l-1-8-2 8h-3z" fill="#c19658"/>
<ellipse cx="444" cy="655" rx="4.500" ry="3.500" fill="#2b2220"/><ellipse cx="465" cy="657" rx="4" ry="2.500" fill="#2b2220"/>
<circle cx="523.500" cy="630" r="2.200" fill="#5b4438"/><path d="M519 634h9l2 10h-9zM512 642l8-7v2l-7 6zM528 635l4 8-1 1-4-7z" fill="#b9cfe1"/><path d="M521 644h7l1 15h-3l-1-8-2 8h-3z" fill="#c19658"/>
<ellipse cx="514" cy="654" rx="3" ry="4" fill="#2b2220"/><ellipse cx="535" cy="655" rx="5" ry="3" fill="#2b2220"/>
<ellipse cx="573" cy="655" rx="3" ry="4" fill="#2b2220"/>
</g>
</g>
<rect x="356" y="634" width="2.500" height="8" rx="1" fill="#17181c" stroke="#10bfdc" stroke-width=".5"/>
<rect x="574" y="640" width="2.500" height="8" rx="1" fill="#17181c" stroke="#10bfdc" stroke-width=".5"/>
<rect x="358" y="628" width="46" height="12" rx="3" fill="#6f7173" fill-opacity=".88"/>
<text x="361" y="634.300" style="font-size:9.500px;fill:#eef0f2;letter-spacing:.05px">video clip</text>
<rect x="406" y="628" width="45" height="12" rx="3" fill="#6f7173" fill-opacity=".88"/>
<text x="409" y="634.300" style="font-size:9.500px;fill:#eef0f2">00:08:00</text>

<!-- playhead -->
<rect x="380.300" y="580" width="1.500" height="113" fill="#111"/>
<path d="M377.500 572.500c0-.8.600-1.300 1.300-1.300h4.400c.8 0 1.300.5 1.300 1.300v7.500l-3.500 3-3.500-3z" fill="#fff" stroke="#111" stroke-width="1.300"/>

<!-- bottom scrollbars -->
<rect x="306" y="693" width="717" height="10" fill="#f1f1f1"/>
<rect x="319" y="693" width="694" height="10" fill="#cbcbcb"/>
<path d="M313.500 696.500l-2.500 2.500 2.500 2.500" fill="none" stroke="#555" stroke-width="1.300"/>
</svg>
</body></html>
